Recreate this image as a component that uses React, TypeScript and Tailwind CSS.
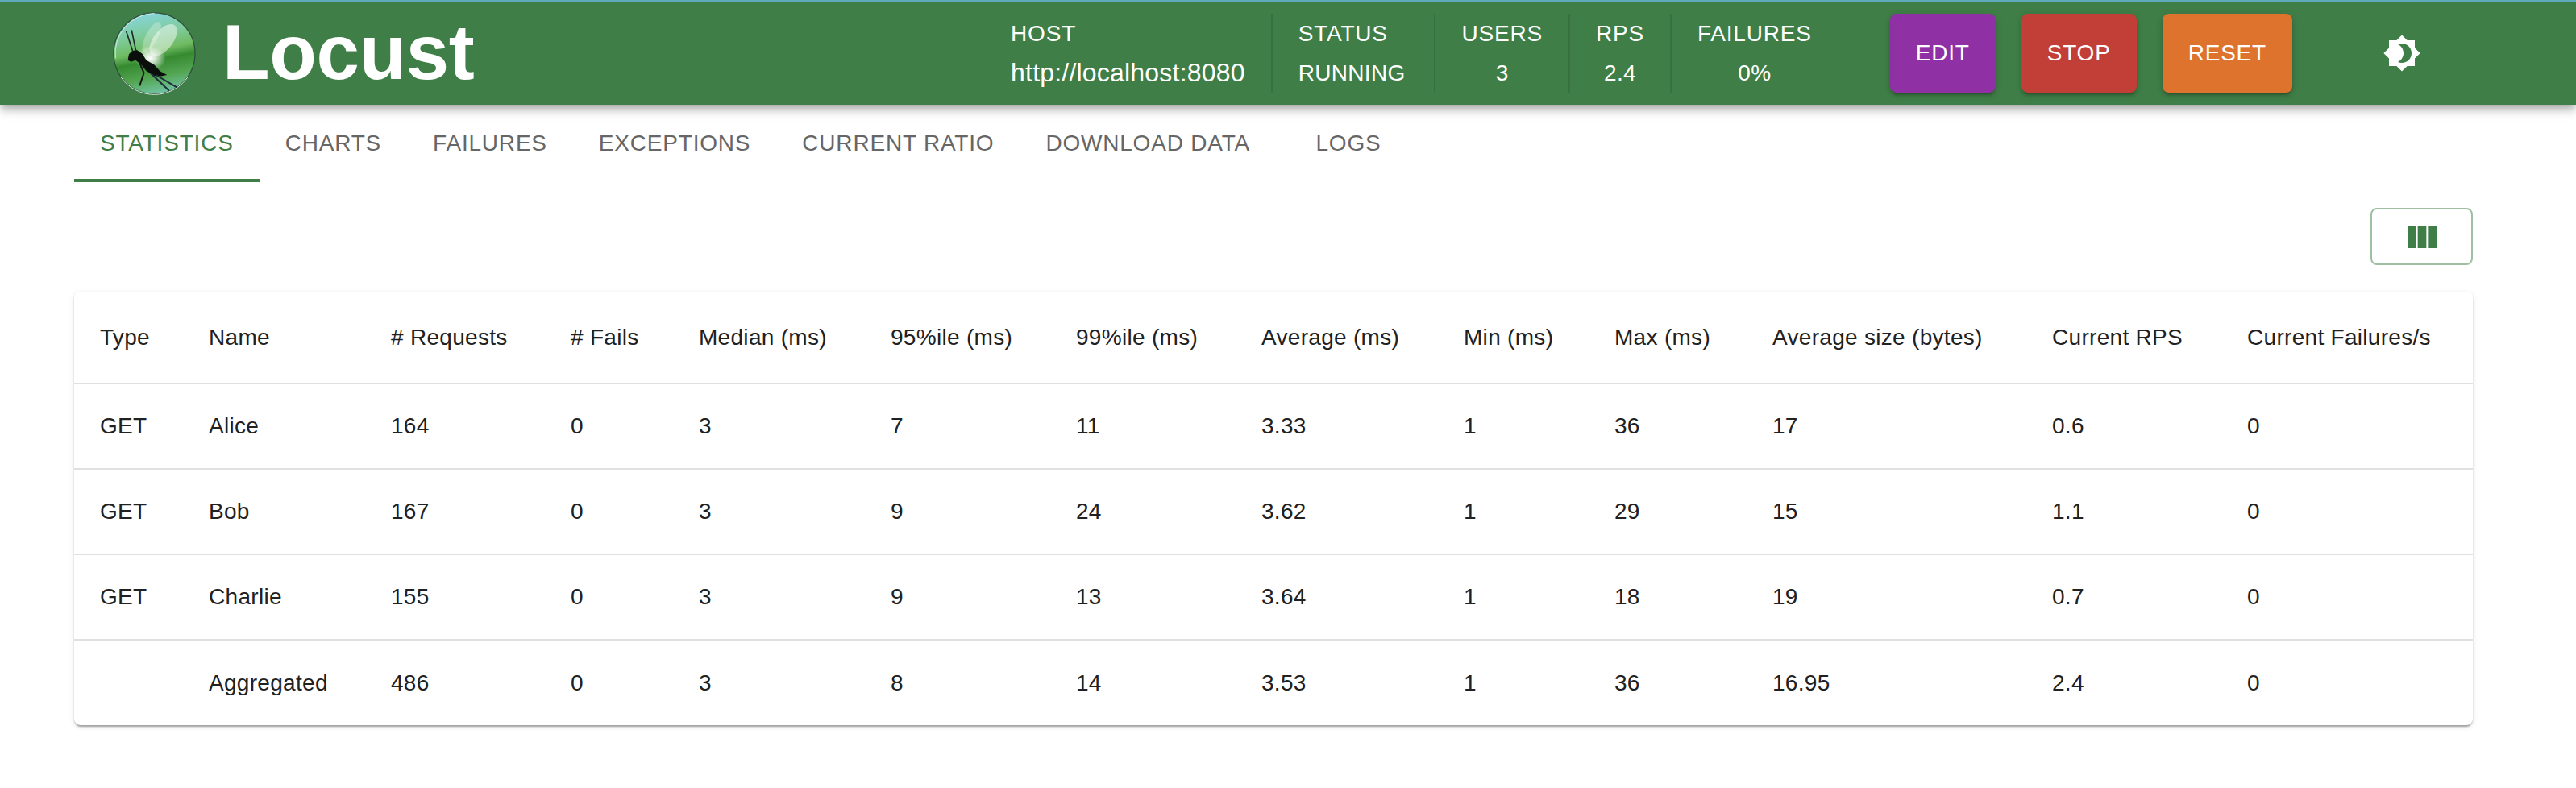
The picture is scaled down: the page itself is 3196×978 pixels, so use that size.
import React from "react";

const columns = [
  { label: "Type", width: "w-[135px]" },
  { label: "Name", width: "w-[226px]" },
  { label: "# Requests", width: "w-[223px]" },
  { label: "# Fails", width: "w-[159px]" },
  { label: "Median (ms)", width: "w-[238px]" },
  { label: "95%ile (ms)", width: "w-[230px]" },
  { label: "99%ile (ms)", width: "w-[230px]" },
  { label: "Average (ms)", width: "w-[251px]" },
  { label: "Min (ms)", width: "w-[187px]" },
  { label: "Max (ms)", width: "w-[196px]" },
  { label: "Average size (bytes)", width: "w-[347px]" },
  { label: "Current RPS", width: "w-[242px]" },
  { label: "Current Failures/s", width: "w-[312px]" },
];

const rows = [
  ["GET", "Alice", "164", "0", "3", "7", "11", "3.33", "1", "36", "17", "0.6", "0"],
  ["GET", "Bob", "167", "0", "3", "9", "24", "3.62", "1", "29", "15", "1.1", "0"],
  ["GET", "Charlie", "155", "0", "3", "9", "13", "3.64", "1", "18", "19", "0.7", "0"],
  ["", "Aggregated", "486", "0", "3", "8", "14", "3.53", "1", "36", "16.95", "2.4", "0"],
];

const tabs = ["STATISTICS", "CHARTS", "FAILURES", "EXCEPTIONS", "CURRENT RATIO", "DOWNLOAD DATA", "LOGS"];

const LocustLogo = () => (
  <svg viewBox="60 40 310 315" className="w-[103px] h-[105px] shrink-0">
    <defs>
      <linearGradient id="ball" x1="0.3" y1="0" x2="0.5" y2="1">
        <stop offset="0" stopColor="#86d6e0" />
        <stop offset="0.28" stopColor="#7fcb9c" />
        <stop offset="0.48" stopColor="#6fbb62" />
        <stop offset="0.6" stopColor="#358a30" />
        <stop offset="0.8" stopColor="#54a552" />
        <stop offset="1" stopColor="#70c3a2" />
      </linearGradient>
      <radialGradient id="glow" cx="0.5" cy="0.5" r="0.5">
        <stop offset="0" stopColor="#ffffff" />
        <stop offset="0.35" stopColor="#ffffff" stopOpacity="0.75" />
        <stop offset="1" stopColor="#ffffff" stopOpacity="0" />
      </radialGradient>
    </defs>
    <circle cx="215" cy="197" r="152" fill="url(#ball)" stroke="#2f4f3c" strokeWidth="4" />
    <path d="M70 215 A150 150 0 0 1 215 47" fill="none" stroke="#cfe9e2" strokeWidth="3" />
    <path d="M90 285 A152 152 0 0 0 340 285" fill="none" stroke="#dbeee2" strokeWidth="3" />
    <ellipse cx="205" cy="135" rx="22" ry="62" transform="rotate(28 205 135)" fill="#ffffff" fillOpacity="0.28" />
    <ellipse cx="248" cy="147" rx="36" ry="70" transform="rotate(38 248 147)" fill="#ffffff" fillOpacity="0.48" />
    <ellipse cx="200" cy="215" rx="58" ry="46" fill="url(#glow)" />
    <path
      d="M116 222 L120 200 L132 188 L150 184 L170 198 L185 222 L215 240 L235 262 L262 277 L240 282 L215 280 L185 262 L165 238 L145 222 L128 228 Z"
      fill="#0b0f0c"
    />
    <path d="M134 188 L110 114 M146 186 L130 110" stroke="#1f2b2a" strokeWidth="5" fill="none" />
    <path d="M160 232 L176 270 L160 318" stroke="#101512" strokeWidth="6" fill="none" />
    <path d="M200 270 L270 336 M222 278 L300 324" stroke="#1d2d3a" strokeWidth="6" fill="none" />
  </svg>
);

const Stat = ({ label, value, valueClass, center, last, pad }: { label: string; value: string; valueClass?: string; center?: boolean; last?: boolean; pad?: string }) => (
  <div className={`h-full leading-[49px] whitespace-nowrap ${pad ?? "px-8"} ${center ? "text-center" : ""} ${last ? "" : "border-r-2 border-black/10"}`}>
    <p className="tracking-[0.8px]">{label}</p>
    <p className={valueClass ?? "tracking-[0.3px]"}>{value}</p>
  </div>
);

const HeaderButton = ({ label, color }: { label: string; color: string }) => (
  <div className={`h-full px-8 flex items-center rounded-lg tracking-[0.8px] shadow-[0_6px_2px_-4px_rgba(0,0,0,0.2),0_4px_4px_0_rgba(0,0,0,0.14),0_2px_10px_0_rgba(0,0,0,0.12)] ${color}`}>
    {label}
  </div>
);

const App = () => {
  return (
    <div className="w-[3196px] h-[978px] bg-white overflow-hidden font-['Liberation_Sans',sans-serif] text-[28px]">
      <header className="relative h-[130px] border-t-2 border-[#5fa9bb] bg-[#3f7e47] text-white flex items-center pl-[140px] pr-[176px] shadow-[0_4px_8px_-2px_rgba(0,0,0,0.2),0_8px_10px_0_rgba(0,0,0,0.14),0_2px_20px_0_rgba(0,0,0,0.12)]">
        <LocustLogo />
        <span className="ml-[33px] text-[96px] font-bold leading-none tracking-[-0.4px] -mt-[3px]">Locust</span>
        <div className="ml-auto h-[98px] flex">
          <Stat label="HOST" value="http://localhost:8080" valueClass="text-[32px] tracking-[0.2px]" />
          <Stat label="STATUS" value="RUNNING" pad="pl-8 pr-[36px]" />
          <Stat label="USERS" value="3" center />
          <Stat label="RPS" value="2.4" center />
          <Stat label="FAILURES" value="0%" center last />
        </div>
        <div className="ml-[65px] h-[98px] flex gap-8">
          <HeaderButton label="EDIT" color="bg-[#9030a5]" />
          <HeaderButton label="STOP" color="bg-[#c13f37]" />
          <HeaderButton label="RESET" color="bg-[#de732d]" />
        </div>
        <div className="ml-[96px] w-20 h-20 flex items-center justify-center">
          <svg viewBox="0 0 24 24" className="w-12 h-12 fill-white">
            <path d="M20 8.69V4h-4.69L12 .69 8.69 4H4v4.69L.69 12 4 15.31V20h4.69L12 23.31 15.31 20H20v-4.69L23.31 12 20 8.69zM12 18c-.89 0-1.74-.2-2.5-.55C11.56 16.5 13 14.42 13 12s-1.44-4.5-3.5-5.45C10.26 6.2 11.11 6 12 6c3.31 0 6 2.69 6 6s-2.69 6-6 6z" />
          </svg>
        </div>
      </header>

      <main className="pl-[92px] pr-[128px]">
        <nav className="flex h-24">
          {tabs.map((tab, i) => (
            <div
              key={tab}
              className={`h-full min-w-[180px] px-8 flex items-center justify-center tracking-[0.8px] whitespace-nowrap ${
                i === 0 ? "text-[#3f7e47] shadow-[inset_0_-4px_0_#3f7e47]" : "text-[#666666]"
              }`}
            >
              {tab}
            </div>
          ))}
        </nav>

        <div className="flex justify-end mt-8 mb-[33px]">
          <div className="w-[127px] h-[71px] rounded-lg border-2 border-[#9fbfa3] flex items-center justify-center">
            <svg viewBox="0 0 24 24" className="w-12 h-12 fill-[#3f7e47]">
              <path d="M14.67 5v14H9.33V5h5.34zm1 14H21V5h-5.33v14zm-7.34 0V5H3v14h5.33z" />
            </svg>
          </div>
        </div>

        <div className="rounded-lg bg-white shadow-[0_4px_2px_-2px_rgba(0,0,0,0.2),0_2px_2px_0_rgba(0,0,0,0.14),0_2px_6px_0_rgba(0,0,0,0.12)]">
          <table className="w-full table-fixed text-[#212121] tracking-[0.3px]">
            <thead>
              <tr>
                {columns.map((col) => (
                  <th key={col.label} className={`h-[114px] pl-8 text-left font-normal border-b-2 border-[#e0e0e0] whitespace-nowrap ${col.width}`}>
                    {col.label}
                  </th>
                ))}
              </tr>
            </thead>
            <tbody>
              {rows.map((row, r) => (
                <tr key={r}>
                  {row.map((cell, c) => (
                    <td key={c} className={`h-[106px] pl-8 ${r < rows.length - 1 ? "border-b-2 border-[#e0e0e0]" : ""}`}>
                      {cell}
                    </td>
                  ))}
                </tr>
              ))}
            </tbody>
          </table>
        </div>
      </main>
    </div>
  );
};

export default App;
